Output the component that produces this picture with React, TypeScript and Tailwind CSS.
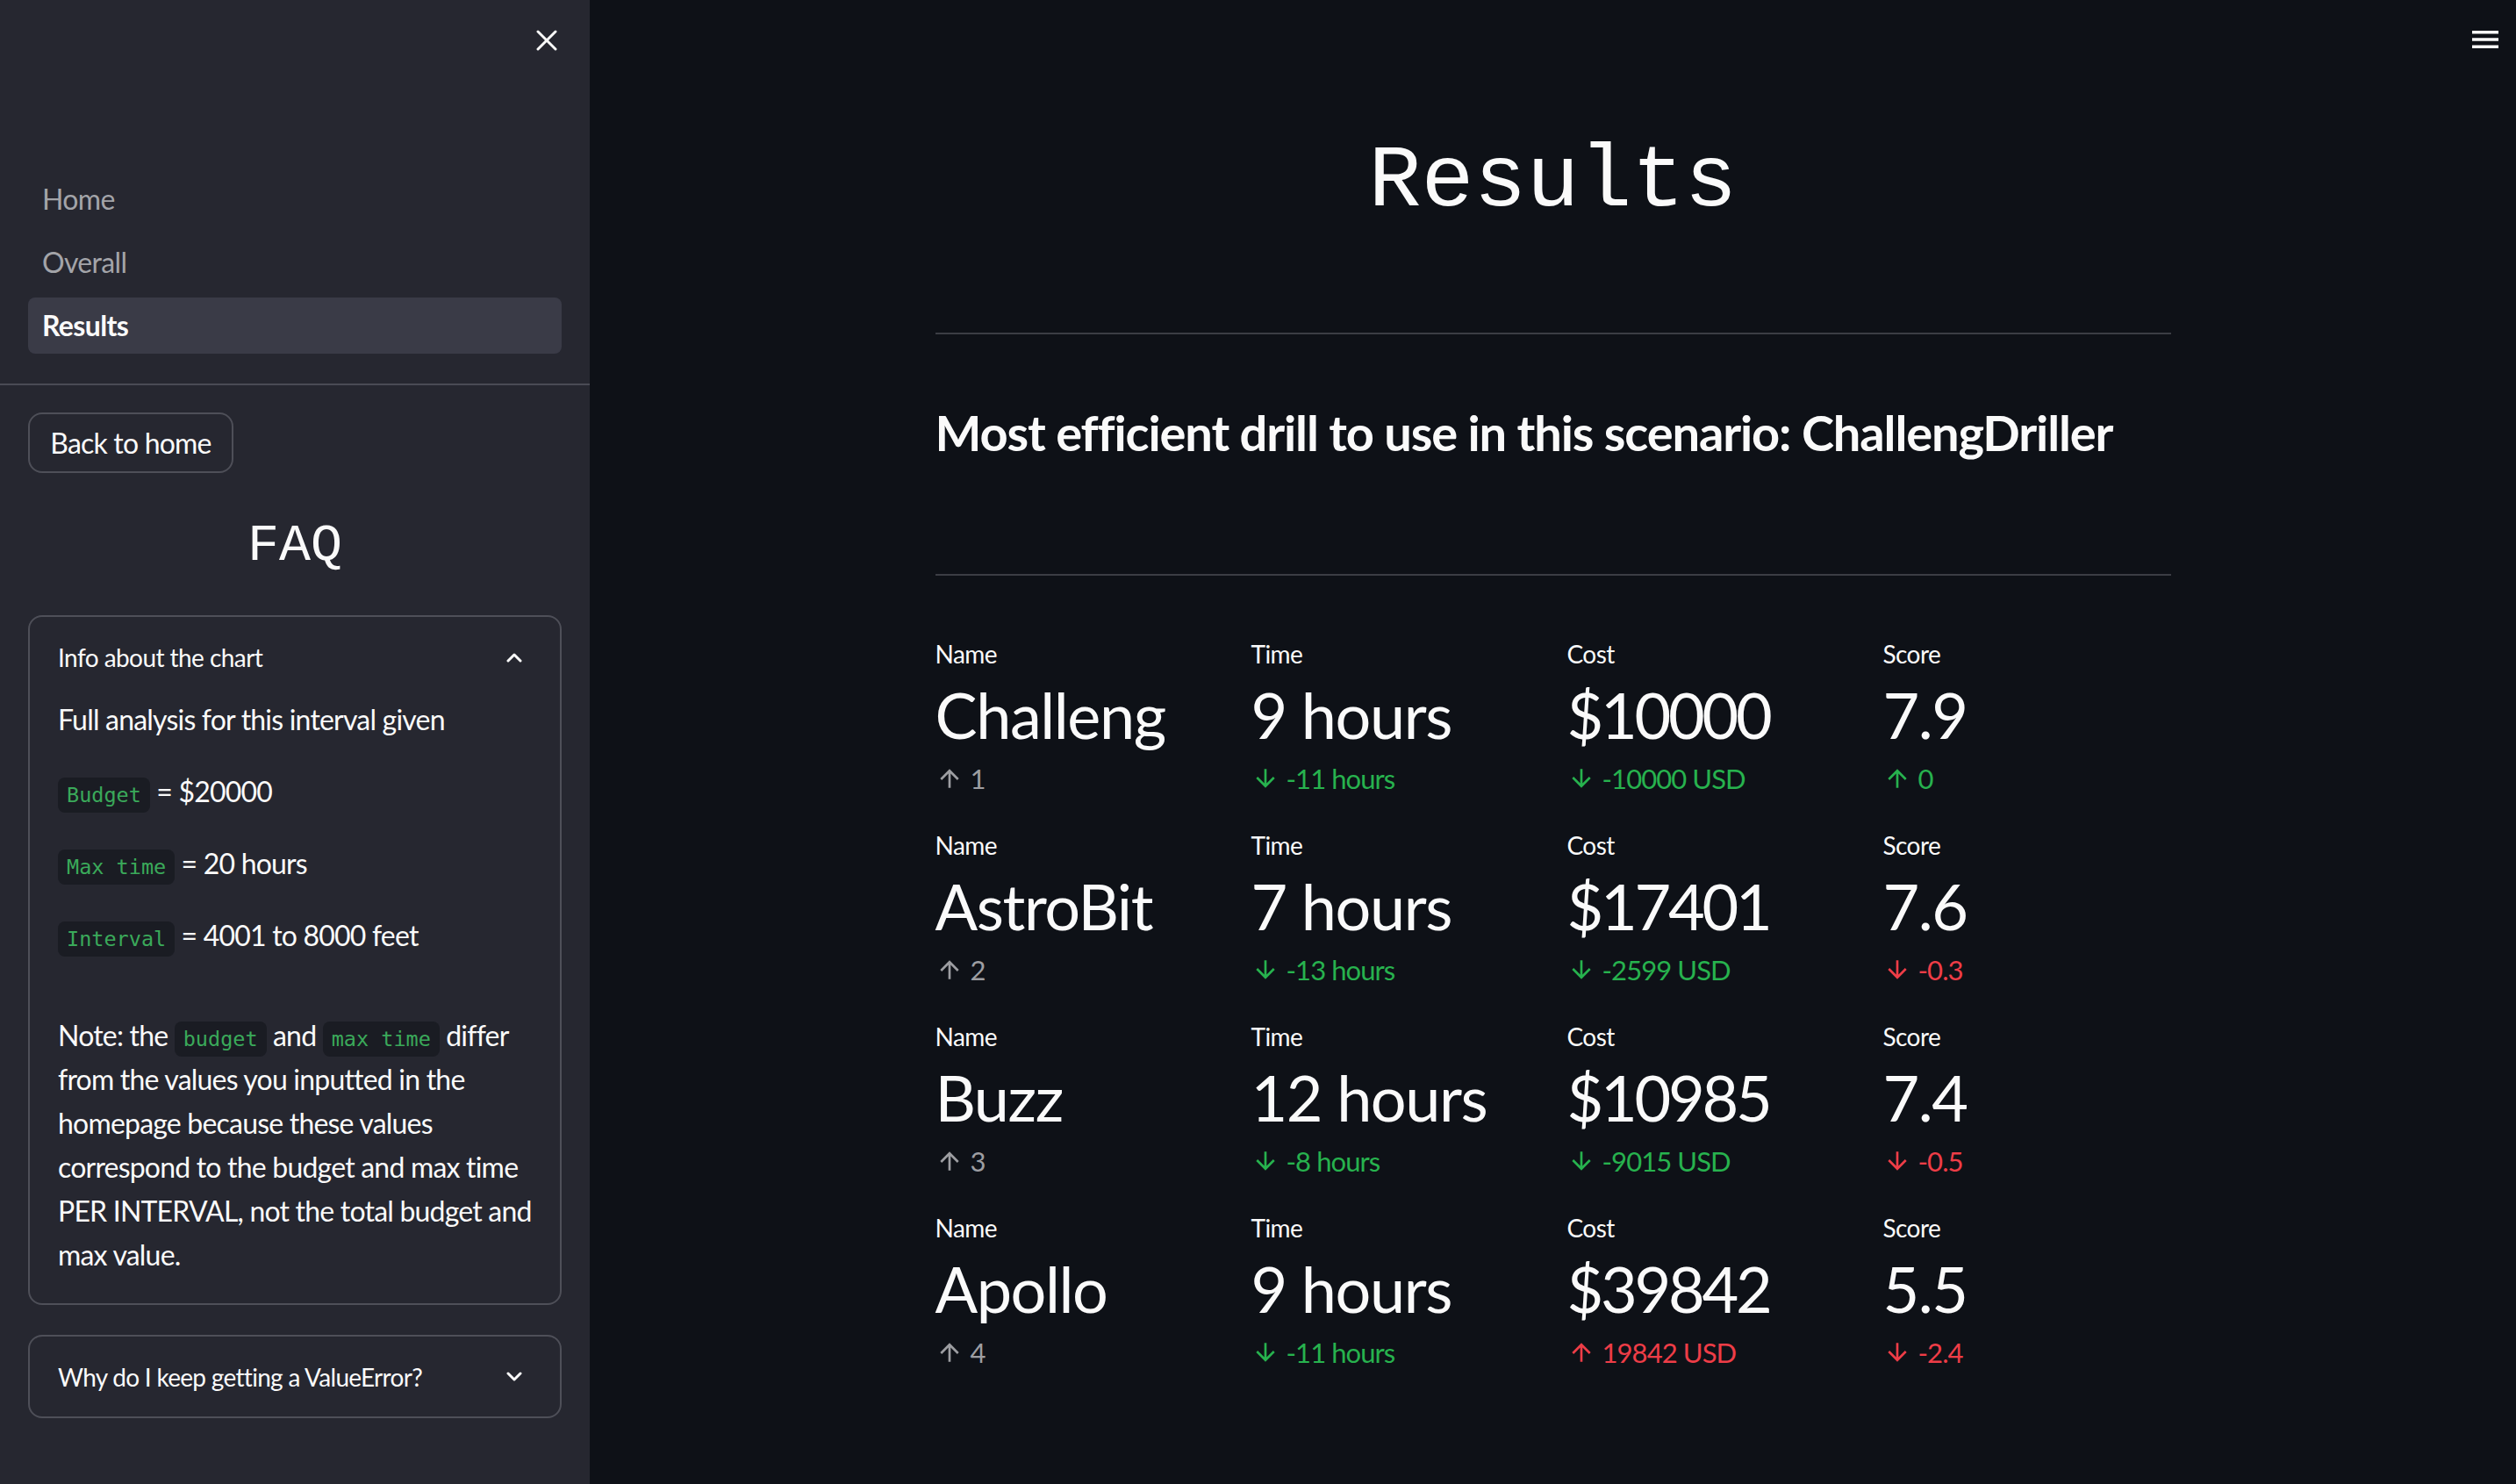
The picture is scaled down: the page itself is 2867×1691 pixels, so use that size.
const sans = "font-['Lato','Liberation_Sans',sans-serif]";

type Tone = "up" | "down";
type Color = "green" | "red" | "grey";

const rows: {
  cells: { label: string; value: string; delta: string; dir: Tone; color: Color }[];
}[] = [
  {
    cells: [
      { label: "Name", value: "Challeng", delta: "1", dir: "up", color: "grey" },
      { label: "Time", value: "9 hours", delta: "-11 hours", dir: "down", color: "green" },
      { label: "Cost", value: "$10000", delta: "-10000 USD", dir: "down", color: "green" },
      { label: "Score", value: "7.9", delta: "0", dir: "up", color: "green" },
    ],
  },
  {
    cells: [
      { label: "Name", value: "AstroBit", delta: "2", dir: "up", color: "grey" },
      { label: "Time", value: "7 hours", delta: "-13 hours", dir: "down", color: "green" },
      { label: "Cost", value: "$17401", delta: "-2599 USD", dir: "down", color: "green" },
      { label: "Score", value: "7.6", delta: "-0.3", dir: "down", color: "red" },
    ],
  },
  {
    cells: [
      { label: "Name", value: "Buzz", delta: "3", dir: "up", color: "grey" },
      { label: "Time", value: "12 hours", delta: "-8 hours", dir: "down", color: "green" },
      { label: "Cost", value: "$10985", delta: "-9015 USD", dir: "down", color: "green" },
      { label: "Score", value: "7.4", delta: "-0.5", dir: "down", color: "red" },
    ],
  },
  {
    cells: [
      { label: "Name", value: "Apollo", delta: "4", dir: "up", color: "grey" },
      { label: "Time", value: "9 hours", delta: "-11 hours", dir: "down", color: "green" },
      { label: "Cost", value: "$39842", delta: "19842 USD", dir: "up", color: "red" },
      { label: "Score", value: "5.5", delta: "-2.4", dir: "down", color: "red" },
    ],
  },
];

const colorClass: Record<Color, string> = {
  green: "text-[#27b24e]",
  red: "text-[#ee3d47]",
  grey: "text-[#9d9ea2]",
};

const Arrow = ({ dir }: { dir: Tone }) => (
  <svg width="32" height="32" viewBox="0 0 24 24" fill="currentColor" className={dir === "down" ? "rotate-180" : ""}>
    <path d="M4 12l1.41 1.41L11 7.83V20h2V7.83l5.58 5.59L20 12l-8-8-8 8z" />
  </svg>
);

const Code = ({ children }: { children: string }) => (
  <span className="inline-flex h-[40px] items-center rounded-[8px] bg-[#1a1c23] px-[10px] align-middle font-['DejaVu_Sans_Mono',monospace] text-[23.5px] tracking-normal text-[#3aa95a]">
    {children}
  </span>
);

const Chevron = ({ up }: { up?: boolean }) => (
  <svg width="18" height="11" viewBox="0 0 18 11" fill="none" stroke="#fafafa" strokeWidth="3" strokeLinecap="round" strokeLinejoin="round">
    {up ? <polyline points="2,9 9,2 16,9" /> : <polyline points="2,2 9,9 16,2" />}
  </svg>
);

const body = "text-[32px] leading-[50px] tracking-[-0.025em] whitespace-nowrap";

export default function App() {
  return (
    <div className={`flex h-[1691px] w-full overflow-hidden bg-[#0e1117] text-[#fafafa] ${sans}`}>
      <aside className="flex w-[672px] shrink-0 flex-col bg-[#262730]">
        <div className="flex h-[195px] shrink-0 justify-end pr-[37px] pt-[34px]">
          <svg width="24" height="24" viewBox="0 0 24 24" stroke="#fafafa" strokeWidth="3" strokeLinecap="round">
            <line x1="2" y1="2" x2="22" y2="22" />
            <line x1="22" y1="2" x2="2" y2="22" />
          </svg>
        </div>

        <nav className="flex shrink-0 flex-col gap-[8px] px-[32px] text-[32px] tracking-[-0.02em]">
          <div className="flex h-[64px] items-center rounded-[8px] px-[16px] text-[#a3a4a9]">Home</div>
          <div className="flex h-[64px] items-center rounded-[8px] px-[16px] text-[#a3a4a9]">Overall</div>
          <div className="flex h-[64px] items-center rounded-[8px] bg-[#3a3b47] px-[16px] font-bold text-[#fafafa]">Results</div>
        </nav>

        <div className="mt-[34px] h-[2px] shrink-0 bg-[#4a4b55]" />

        <div className="flex shrink-0 flex-col px-[32px]">
          <button className="mt-[31px] flex h-[69px] w-[234px] items-center justify-center rounded-[16px] border-2 border-[#4e4f58] text-[32px] tracking-[-0.025em] text-[#fafafa]">
            Back to home
          </button>

          <h2 className="mt-[43px] text-center font-['Liberation_Mono',monospace] text-[60px] leading-[80px] font-normal">FAQ</h2>

          <div className="mt-[39px] rounded-[16px] border-2 border-[#4e4f58] px-[32px] pb-[30px]">
            <div className="flex h-[92px] items-center justify-between text-[28px] tracking-[-0.02em]">
              <span>Info about the chart</span>
              <span className="mr-[11px] flex">
                <Chevron up />
              </span>
            </div>
            <p className={body}>Full analysis for this interval given</p>
            <p className={`mt-[32px] ${body}`}>
              <Code>Budget</Code> = $20000
            </p>
            <p className={`mt-[32px] ${body}`}>
              <Code>Max time</Code> = 20 hours
            </p>
            <p className={`mt-[32px] ${body}`}>
              <Code>Interval</Code> = 4001 to 8000 feet
            </p>
            <div className={`mt-[64px] flex flex-col ${body}`}>
              <span>
                Note: the <Code>budget</Code> and <Code>max time</Code> differ
              </span>
              <span>from the values you inputted in the</span>
              <span>homepage because these values</span>
              <span>correspond to the budget and max time</span>
              <span>PER INTERVAL, not the total budget and</span>
              <span>max value.</span>
            </div>
          </div>

          <div className="mt-[34px] flex h-[95px] items-center justify-between rounded-[16px] border-2 border-[#4e4f58] px-[32px] text-[28px] tracking-[-0.025em]">
            <span>Why do I keep getting a ValueError?</span>
            <span className="mr-[11px] flex">
              <Chevron />
            </span>
          </div>
        </div>
      </aside>

      <main className="relative flex-1">
        <div className="absolute right-[20px] top-[35px]">
          <svg width="30" height="20" viewBox="0 0 30 20" fill="#fafafa">
            <rect x="0" y="0" width="30" height="3.5" />
            <rect x="0" y="8.25" width="30" height="3.5" />
            <rect x="0" y="16.5" width="30" height="3.5" />
          </svg>
        </div>

        <div className="mx-auto flex w-[1408px] flex-col pt-[148px]">
          <h1 className="text-center font-['Liberation_Mono',monospace] text-[100px] leading-[120px] font-normal">Results</h1>

          <div className="mt-[111px] h-[2px] bg-[#3b3d44]" />

          <h3 className="mt-[76px] text-[56px] leading-[72px] font-bold tracking-[-0.02em]">
            Most efficient drill to use in this scenario: ChallengDriller
          </h3>

          <div className="mt-[125px] h-[2px] bg-[#3b3d44]" />

          <div className="mt-[65px] grid grid-cols-4 gap-x-[32px] gap-y-[24px]">
            {rows.flatMap((r, i) =>
              r.cells.map((c, j) => (
                <div key={`${i}-${j}`} className="flex flex-col">
                  <div className="flex h-[48px] items-center text-[28px] tracking-[-0.02em]">{c.label}</div>
                  <div
                    className={`flex h-[90px] items-center text-[72px] leading-none ${
                      c.label === "Cost" ? "tracking-[-0.045em]" : "tracking-[-0.02em]"
                    }`}
                  >
                    {c.value}
                  </div>
                  <div className={`flex h-[56px] items-center gap-[8px] text-[31px] tracking-[-0.03em] ${colorClass[c.color]}`}>
                    <Arrow dir={c.dir} />
                    <span>{c.delta}</span>
                  </div>
                </div>
              ))
            )}
          </div>
        </div>
      </main>
    </div>
  );
}
